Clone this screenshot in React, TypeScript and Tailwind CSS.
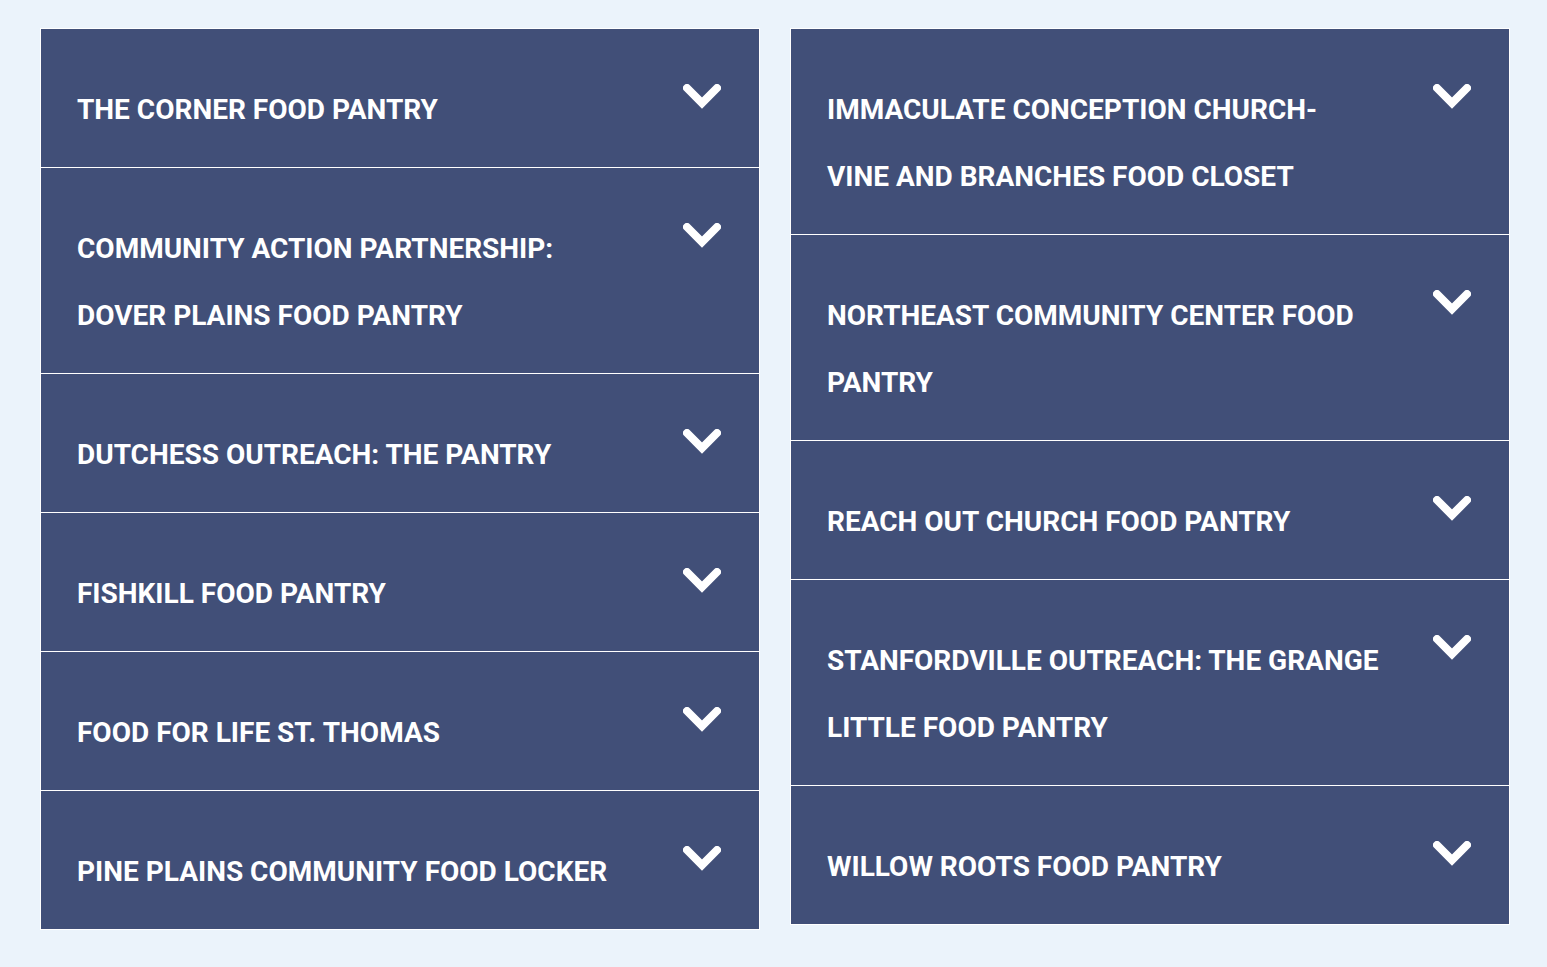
import React from "react";

const left: string[][] = [
  ["THE CORNER FOOD PANTRY"],
  ["COMMUNITY ACTION PARTNERSHIP:", "DOVER PLAINS FOOD PANTRY"],
  ["DUTCHESS OUTREACH: THE PANTRY"],
  ["FISHKILL FOOD PANTRY"],
  ["FOOD FOR LIFE ST. THOMAS"],
  ["PINE PLAINS COMMUNITY FOOD LOCKER"],
];

const right: string[][] = [
  ["IMMACULATE CONCEPTION CHURCH-", "VINE AND BRANCHES FOOD CLOSET"],
  ["NORTHEAST COMMUNITY CENTER FOOD", "PANTRY"],
  ["REACH OUT CHURCH FOOD PANTRY"],
  ["STANFORDVILLE OUTREACH: THE GRANGE", "LITTLE FOOD PANTRY"],
  ["WILLOW ROOTS FOOD PANTRY"],
];

function Chevron() {
  return (
    <svg width="38" height="25" viewBox="0 0 38 25" className="shrink-0">
      <polyline
        points="4,4 19,19 34,4"
        fill="none"
        stroke="#ffffff"
        strokeWidth="8"
        strokeLinecap="round"
        strokeLinejoin="miter"
      />
    </svg>
  );
}

function Item({ lines, first }: { lines: string[]; first: boolean }) {
  return (
    <div
      className={`flex items-start justify-between bg-[#414f78] pl-[36px] pr-[38px] pt-[47px] pb-[24px] ${
        first ? "" : "border-t border-white"
      }`}
    >
      <div className="text-[28px] leading-[67px] font-bold text-white">
        {lines.map((l, i) => (
          <div key={i}>{l}</div>
        ))}
      </div>
      <div className="mt-[8px]">
        <Chevron />
      </div>
    </div>
  );
}

function Column({ items }: { items: string[][] }) {
  return (
    <div className="w-[720px] border border-white flex flex-col">
      {items.map((lines, i) => (
        <Item key={i} lines={lines} first={i === 0} />
      ))}
    </div>
  );
}

export default function App() {
  return (
    <div
      className="min-h-[967px] w-full bg-[#ebf3fb] pt-[28px] pl-[40px] flex items-start gap-[30px]"
      style={{ fontFamily: "Roboto, 'Liberation Sans', sans-serif" }}
    >
      <Column items={left} />
      <Column items={right} />
    </div>
  );
}
